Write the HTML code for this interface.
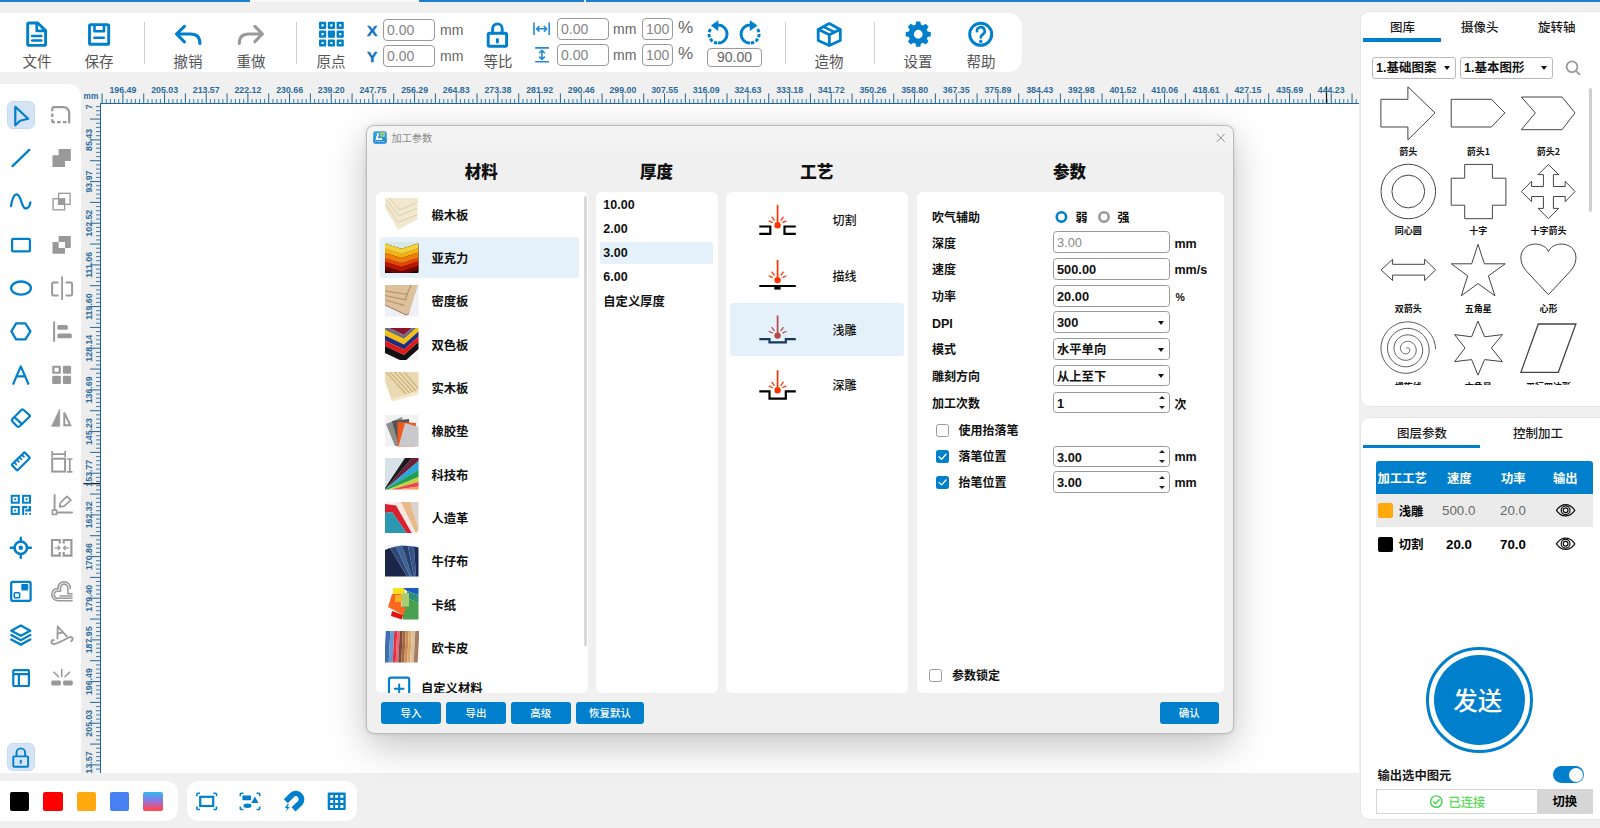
<!DOCTYPE html>
<html lang="zh-CN">
<head>
<meta charset="utf-8">
<title>加工参数</title>
<style>
*{box-sizing:border-box;margin:0;padding:0}
html,body{width:1600px;height:828px;overflow:hidden;background:#f0f0f0;font-family:"Liberation Sans","Noto Sans CJK SC",sans-serif;color:#000}
.abs{position:absolute}
#app{position:relative;width:1600px;height:828px;overflow:hidden;background:#f0f0f0}
.topline{position:absolute;top:0;height:2px;background:#1c7fcf}
/* toolbar */
#tb{position:absolute;left:0;top:13px;width:1022px;height:59px;background:#fff;border-radius:0 14px 14px 0}
.tbl{position:absolute;top:41px;width:60px;text-align:center;font-size:14.5px;line-height:14px;color:#555;font-family:"Noto Sans CJK SC","Liberation Sans",sans-serif}
.sep{position:absolute;top:9px;width:1px;height:42px;background:#cfcfcf}
.inp{position:absolute;height:22px;border:1px solid #9a9a9a;border-radius:4px;background:#fff;font-size:14px;line-height:20px;color:#858585;padding-left:3px}
.unit{position:absolute;font-size:14px;line-height:16px;color:#666}
.xy{position:absolute;font-size:15.500px;font-weight:bold;color:#1574c4;line-height:16px;-webkit-text-stroke:0.400px #1574c4}
svg{position:absolute;overflow:visible}
</style>
</head>
<body>
<div id="app">
<div class="topline" style="left:0;width:250px"></div>
<div class="topline" style="left:250px;width:169px;background:#fafafa"></div>
<div class="topline" style="left:419px;width:165px"></div>
<div class="topline" style="left:586px;width:1014px"></div>
<div id="tb">
<div class="tbl" style="left:7px">文件</div>
<div class="tbl" style="left:69px">保存</div>
<div class="sep" style="left:144px"></div>
<div class="tbl" style="left:158px">撤销</div>
<div class="tbl" style="left:221px">重做</div>
<div class="sep" style="left:296px"></div>
<div class="tbl" style="left:301px">原点</div>
<div class="xy" style="left:367px;top:10px">X</div>
<div class="xy" style="left:367px;top:36px">Y</div>
<div class="inp" style="left:383px;top:6px;width:52px">0.00</div>
<div class="inp" style="left:383px;top:32px;width:52px">0.00</div>
<div class="unit" style="left:440px;top:9px">mm</div>
<div class="unit" style="left:440px;top:35px">mm</div>
<div class="tbl" style="left:468px">等比</div>
<div class="inp" style="left:557px;top:5px;width:51.500px">0.00</div>
<div class="inp" style="left:557px;top:31px;width:51.500px">0.00</div>
<div class="unit" style="left:613px;top:8px">mm</div>
<div class="unit" style="left:613px;top:34px">mm</div>
<div class="inp" style="left:642px;top:5px;width:31px">100</div>
<div class="inp" style="left:642px;top:31px;width:31px">100</div>
<div class="unit" style="left:678px;top:7px;font-size:17px">%</div>
<div class="unit" style="left:678px;top:33px;font-size:17px">%</div>
<div class="inp" style="left:707px;top:35px;width:55px;height:19px;line-height:17px;text-align:center;padding:0;color:#666">90.00</div>
<div class="sep" style="left:785px"></div>
<div class="tbl" style="left:799px">造物</div>
<div class="sep" style="left:874px"></div>
<div class="tbl" style="left:888px">设置</div>
<div class="tbl" style="left:951px">帮助</div>
</div>
<svg style="left:0;top:0" width="1022" height="80" viewBox="0 0 1022 80" fill="none" stroke="#007fcc" stroke-width="2.9" stroke-linecap="round" stroke-linejoin="round">
<!-- file -->
<path d="M27.7 24.4Q27.7 23 29.1 23H37.8L45.6 30.6V44Q45.6 45.4 44.2 45.4H29.1Q27.7 45.4 27.7 44Z"/>
<path d="M36.7 23.4V30.9H45.2" stroke-width="2.6"/>
<path d="M32.2 36.1H41.4M32.2 40.4H41.4" stroke-width="2.5"/>
<!-- save -->
<rect x="89.5" y="24.6" width="19.2" height="19.7" rx="1.4"/>
<path d="M94.5 25V31.2H104V25" stroke-width="2.6"/>
<path d="M94.4 37.8H103.8" stroke-width="2.5"/>
<!-- undo -->
<path d="M184.4 26.4L176.5 34L184.4 41.8M177 34H190.5Q199.9 34 199.9 43.4" stroke-width="3.1"/>
<!-- redo -->
<path d="M254.9 26.4L262.4 34L254.9 41.6M262 34H248.7Q239.3 34 239.3 43.4" stroke="#9a9a9a" stroke-width="3.1"/>
<!-- grid -->
<g stroke="none" fill="#007fcc">
<path fill-rule="evenodd" d="M320 21.8h5.2a1 1 0 0 1 1 1v5.2a1 1 0 0 1-1 1H320a1 1 0 0 1-1-1v-5.2a1 1 0 0 1 1-1zm1.5 2.5v2.2h2.2v-2.2z"/>
<path fill-rule="evenodd" d="M328.8 21.8h5.2a1 1 0 0 1 1 1v5.2a1 1 0 0 1-1 1h-5.2a1 1 0 0 1-1-1v-5.2a1 1 0 0 1 1-1zm1.5 2.5v2.2h2.2v-2.2z"/>
<path fill-rule="evenodd" d="M337.6 21.8h5.2a1 1 0 0 1 1 1v5.2a1 1 0 0 1-1 1h-5.2a1 1 0 0 1-1-1v-5.2a1 1 0 0 1 1-1zm1.5 2.5v2.2h2.2v-2.2z"/>
<path fill-rule="evenodd" d="M320 30.6h5.2a1 1 0 0 1 1 1v5.2a1 1 0 0 1-1 1H320a1 1 0 0 1-1-1v-5.2a1 1 0 0 1 1-1zm1.5 2.5v2.2h2.2v-2.2z"/>
<path d="M328.8 30.6h5.2a1 1 0 0 1 1 1v5.2a1 1 0 0 1-1 1h-5.2a1 1 0 0 1-1-1v-5.2a1 1 0 0 1 1-1z"/>
<path fill-rule="evenodd" d="M337.6 30.6h5.2a1 1 0 0 1 1 1v5.2a1 1 0 0 1-1 1h-5.2a1 1 0 0 1-1-1v-5.2a1 1 0 0 1 1-1zm1.5 2.5v2.2h2.2v-2.2z"/>
<path fill-rule="evenodd" d="M320 39.4h5.2a1 1 0 0 1 1 1v5.2a1 1 0 0 1-1 1H320a1 1 0 0 1-1-1v-5.2a1 1 0 0 1 1-1zm1.5 2.5v2.2h2.2v-2.2z"/>
<path fill-rule="evenodd" d="M328.8 39.4h5.2a1 1 0 0 1 1 1v5.2a1 1 0 0 1-1 1h-5.2a1 1 0 0 1-1-1v-5.2a1 1 0 0 1 1-1zm1.5 2.5v2.2h2.2v-2.2z"/>
<path fill-rule="evenodd" d="M337.6 39.4h5.2a1 1 0 0 1 1 1v5.2a1 1 0 0 1-1 1h-5.2a1 1 0 0 1-1-1v-5.2a1 1 0 0 1 1-1zm1.5 2.5v2.2h2.2v-2.2z"/>
</g>
<!-- lock -->
<rect x="488.2" y="33.2" width="18.4" height="13" rx="1.3"/>
<path d="M492.6 33V28.7a4.8 4.8 0 0 1 9.6 0V33"/>
<path d="M497.4 39.6V42" stroke-width="3"/>
<!-- width icon -->
<g stroke="#2389d4" stroke-width="1.6" stroke-linecap="butt">
<path d="M534 22.5V35M549.2 22.5V35M536.8 28.8H546.6M539.5 26L536.6 28.8L539.5 31.6M543.8 26L546.7 28.8L543.8 31.6"/>
<path d="M535.2 47.9H548.9M535.2 61.7H548.9M542 50.6V59.2M539.2 53.2L542 50.3L544.8 53.2M539.2 56.6L542 59.5L544.8 56.6"/>
</g>
<!-- rotate ccw -->
<path d="M718.1 25.1A9 9 0 0 1 718.1 43.1" stroke-width="3" stroke-linecap="butt"/>
<path d="M718.1 43.1A9 9 0 0 1 711.4 28" stroke-width="3" stroke-linecap="butt" stroke-dasharray="3.4 1.6" stroke-dashoffset="-0.8"/>
<path d="M710.9 25.4L718.3 20.2V31Z" fill="#007fcc" stroke="none"/>
<!-- rotate cw -->
<path d="M750 25.1A9 9 0 0 0 750 43.1" stroke-width="3" stroke-linecap="butt"/>
<path d="M750 43.1A9 9 0 0 0 756.7 28" stroke-width="3" stroke-linecap="butt" stroke-dasharray="3.4 1.6" stroke-dashoffset="-0.8"/>
<path d="M757.6 25.4L749.8 20.2V31Z" fill="#007fcc" stroke="none"/>
<!-- box -->
<path d="M829.3 23.6L840.3 29.4V40.4L829.3 45.6L818.2 40.4V29.4Z" stroke-width="2.8"/>
<path d="M818.6 29.6L829.3 34.8L840 29.6M829.3 34.8V45.3" stroke-width="2.8"/>
<path d="M823.6 26.8L834.6 32.2" stroke-width="2.6"/>
<!-- gear -->
<g stroke="none" fill="#007fcc">
<path fill-rule="evenodd" d="M916.2 21.6h4.1l.7 3.2 1.9.8 2.8-1.8 2.9 2.9-1.8 2.8.8 1.9 3.2.7v4.1l-3.2.7-.8 1.9 1.8 2.8-2.9 2.9-2.8-1.8-1.9.8-.7 3.2h-4.1l-.7-3.2-1.900-.8-2.8 1.8-2.9-2.9 1.800-2.800-.8-1.9-3.200-.7v-4.100l3.200-.7.8-1.900-1.800-2.800 2.900-2.900 2.800 1.800 1.900-.8zM918.250 29.850a4.400 4.400 0 1 0 0 8.800a4.400 4.400 0 1 0 0-8.800z"/>
</g>
<!-- help -->
<circle cx="980.7" cy="34.3" r="11" stroke-width="3"/>
<path d="M976.9 31.2a3.900 3.900 0 1 1 5.800 3.300q-1.900 1.100-1.900 3" stroke-width="2.600"/>
<circle cx="980.800" cy="41.400" r="1.700" fill="#007fcc" stroke="none"/>
</svg>
<div class="abs" style="left:0;top:84px;width:81px;height:689px;background:#fff;border-radius:0 12px 0 0"></div>
<div class="abs" style="left:7px;top:101px;width:28px;height:28px;background:#d4e3f5;border:1px solid #c6daf1;border-radius:6px"></div>
<div class="abs" style="left:7px;top:743px;width:28px;height:28px;background:#d4e3f5;border:1px solid #c6daf1;border-radius:6px"></div>
<svg style="left:0;top:84px" width="82" height="690" viewBox="0 84 82 690" fill="none" stroke="#007fcc" stroke-width="2.2" stroke-linecap="round" stroke-linejoin="round">
<!-- r1 cursor -->
<path d="M15.300 106.800L28.200 118.700L20 120.700L15.300 125.300Z"/>
<!-- r1 dashed -->
<g stroke="#9a9a9a" stroke-width="2.300" stroke-linecap="butt">
<path d="M52.300 107.100H63.500A5.700 5.700 0 0 1 69.200 112.800V123.200"/>
<path d="M52.300 106.100V123.200" stroke-dasharray="3.600 2.200" stroke-dashoffset="-1.500"/>
<path d="M52.300 122.200H69.200" stroke-dasharray="3.600 2.200" stroke-dashoffset="1"/>
</g>
<!-- r2 line -->
<path d="M12.500 166.100L29.300 149.900" stroke-width="2.300"/>
<!-- r2 union -->
<path d="M58.600 149H70.800V161H65V167H52.500V155.300H58.600Z" fill="#999" stroke="none"/>
<!-- r3 sine -->
<path d="M11 206C12.300 197.500 14 194.300 16.700 194.300C21.500 194.300 21 208.500 25.900 208.500C28.300 208.500 29.800 205.500 30.400 202.400" stroke-width="2.300"/>
<!-- r3 intersect -->
<g stroke="#999" stroke-width="1.300" stroke-linejoin="miter">
<rect x="58.600" y="193.300" width="11.500" height="11"/>
<rect x="53.100" y="198.800" width="11.500" height="11"/>
<rect x="58.600" y="198.800" width="6" height="5.500" fill="#999" stroke="none"/>
</g>
<!-- r4 rect -->
<rect x="12.100" y="238.900" width="17.800" height="12.500" rx="1"/>
<!-- r4 difference -->
<path fill-rule="evenodd" d="M58.600 236H70.800V248H65V253.800H52.500V241.900H58.600ZM58.600 241.900V248H65V241.900Z" fill="#999" stroke="none"/>
<!-- r5 ellipse -->
<ellipse cx="21" cy="288.100" rx="9.900" ry="6.600" stroke-width="2.300"/>
<!-- r5 mirror -->
<g stroke="#9a9a9a" stroke-width="2">
<path d="M62.100 277.200V299.200" stroke-width="1.800"/>
<path d="M57.800 282.500H53.300Q52.100 282.500 52.100 283.700V294.200Q52.100 295.400 53.300 295.400H57.800"/>
<path d="M66.400 282.500H70.900Q72.100 282.500 72.100 283.700V294.200Q72.100 295.400 70.900 295.400H66.400"/>
</g>
<!-- r6 hexagon -->
<path d="M11.400 331.400L16.100 323.400H25.400L30.400 331.400L25.400 339.400H16.100Z" stroke-width="2.300"/>
<!-- r6 align -->
<g stroke="none" fill="#999">
<rect x="53.100" y="321.300" width="2" height="20.600" rx="1"/>
<rect x="57.300" y="325" width="10.500" height="4.700" rx="1.500"/>
<rect x="57.300" y="333.400" width="14.500" height="4.800" rx="1.500"/>
</g>
<!-- r7 A -->
<path d="M13.300 383.800L20.800 366.400L28.300 383.800M16.300 376.400H25.300"/>
<!-- r7 grid4 -->
<g stroke="none" fill="#999">
<path fill-rule="evenodd" d="M53.400 365.700h6.300a1.200 1.200 0 0 1 1.200 1.200v5.700a1.200 1.200 0 0 1-1.200 1.200h-6.300a1.200 1.200 0 0 1-1.200-1.200v-5.700a1.200 1.200 0 0 1 1.200-1.200zm1.100 2.100v3.900h4.100v-3.900z"/>
<rect x="62.900" y="365.700" width="8.200" height="8.100" rx="1.200"/>
<rect x="52.200" y="375.800" width="8.700" height="8.100" rx="1.200"/>
<rect x="62.900" y="375.800" width="8.200" height="8.100" rx="1.200"/>
</g>
<!-- r8 eraser -->
<path d="M21.600 409.700Q22.500 408.900 23.400 409.700L29.500 415.100Q30.400 415.900 29.500 416.700L19.600 426.300Q18.300 427.500 17 426.300L12.400 421.600Q11.400 420.300 12.400 419Z"/>
<path d="M15.100 417.800L22 424.100"/>
<!-- r8 flip -->
<path d="M59.700 409.600V426.200H51.900Z" fill="#999" stroke="#999" stroke-width="0.800"/>
<path d="M64.300 412.600V425.300H70.300Z" stroke="#999" stroke-width="2" stroke-linejoin="miter"/>
<!-- r9 ruler -->
<g transform="translate(20.800 461.350) rotate(-44.500)">
<rect x="-9" y="-4" width="18" height="8" rx="0.800"/>
<path d="M-5.400 -3.500V-0.300M-1.800 -3.500V-0.300M1.800 -3.500V-0.300M5.400 -3.500V-0.300" stroke-width="1.800" stroke-linecap="butt"/>
</g>
<!-- r9 dimension -->
<g stroke="#999" stroke-width="2" stroke-linecap="butt" stroke-linejoin="miter">
<rect x="52.200" y="458.700" width="12.900" height="12.900"/>
<path d="M51.500 454.200H65.800M52.100 451V457.200M65.200 451V457.200" stroke-width="1.700"/>
<path d="M69.800 459V472M67 459H72.400M67 471.900H72.400" stroke-width="1.700"/>
</g>
<!-- r10 qr -->
<g stroke-width="2" stroke-linejoin="miter" stroke-linecap="butt">
<rect x="11.700" y="495.800" width="7.100" height="6.900"/>
<rect x="23.100" y="495.800" width="6.900" height="6.900"/>
<rect x="11.700" y="507" width="7.100" height="6.900"/>
<g stroke="none" fill="#007fcc">
<rect x="14.300" y="498.300" width="1.900" height="1.900"/><rect x="25.600" y="498.300" width="1.900" height="1.900"/><rect x="14.300" y="509.500" width="1.900" height="1.900"/>
<path d="M22.100 506H27.300V508.200H24.200V514.900H22.100Z"/>
<path d="M25.300 509.300H28.600V506H31V511.600H25.300Z"/>
<rect x="25.400" y="513" width="1.700" height="1.900"/><rect x="29.200" y="513" width="1.800" height="1.900"/>
</g>
</g>
<!-- r10 node edit -->
<g stroke="#999" stroke-width="1.900">
<path d="M54.600 495V509.300M57.300 512.500H72"/>
<rect x="52.400" y="510.200" width="4.200" height="4.200" stroke-width="1.600" stroke-linejoin="miter"/>
<path d="M59.600 506.900L60.500 502.600L66.900 496.400L70.800 500.200L64.200 506.200Z" stroke-width="1.700"/>
</g>
<!-- r11 target -->
<circle cx="20.800" cy="547.800" r="6.200" stroke-width="2.600"/>
<circle cx="20.800" cy="547.800" r="2.200" fill="#007fcc" stroke="none"/>
<path d="M20.800 537.800V541M20.800 554.600V557.800M10.800 547.800H14M27.600 547.800H30.900" stroke-width="2.400"/>
<!-- r11 merge -->
<g stroke="#999" stroke-width="2.200" stroke-linecap="butt" stroke-linejoin="miter">
<path d="M59.700 543.600V540H52V555.600H59.700V552"/>
<path d="M63.700 543.600V540H71.400V555.600H63.700V552"/>
<path d="M54.600 547.800H60M57.800 545.600L60 547.800L57.800 550M68.800 547.800H63.400M65.600 545.600L63.400 547.800L65.600 550" stroke-width="1.300"/>
</g>
<!-- r12 blue squares -->
<rect x="11.200" y="581.900" width="19.400" height="18.900" rx="1.600" stroke-width="2.300"/>
<rect x="21.300" y="584" width="6.900" height="6.400" rx="0.800" fill="#007fcc" stroke="none"/>
<rect x="14.300" y="592.800" width="5.300" height="5" rx="0.800" stroke-width="1.600"/>
<!-- r12 heart offset -->
<g stroke="#999" stroke-width="1.600">
<path d="M72 600.700H58.500C54.500 600.700 51.800 598 51.800 594.500C51.800 590.500 55 588.300 58 588.900C57.700 584.500 60.500 581.700 64 581.700C68 581.700 70.500 584.800 70.300 588.500"/>
<path d="M72 598.300H58.700C56 598.300 54.200 596.700 54.200 594.400C54.200 591.800 56.500 590.500 58.800 591.300H60.500V589C60.200 586.200 61.800 584.100 64 584.100C66.500 584.100 68 586.200 67.900 588.500V593.800H72"/>
<path d="M72 596H60"/>
</g>
<!-- r13 layers -->
<path d="M20.800 625.400L30.300 630.700L20.800 635.800L11.300 630.700Z" stroke-width="2.300"/>
<path d="M11.300 635.100L20.800 640.300L30.300 635.100M11.300 639.400L20.800 644.600L30.300 639.400" stroke-width="2.300" stroke-linejoin="miter"/>
<!-- r13 text path -->
<g stroke="#999" stroke-width="1.800">
<path d="M57.400 638.500L57.700 626.500L66.800 636.300M57.500 633.700L63.300 632.300"/>
<path d="M53.800 640.100C51 639.400 50.400 643.700 53.600 644C56.500 644.200 61 641.800 69.300 637.300C72.600 635.700 73.800 639.800 71 641.200"/>
</g>
<!-- r14 table -->
<rect x="13.300" y="670.100" width="15.600" height="15.900" rx="0.800"/>
<path d="M13.300 674.100H28.900M18.900 674.100V686" stroke-linecap="butt"/>
<!-- r14 break -->
<g stroke="none" fill="#999">
<rect x="51.200" y="680.500" width="9.700" height="5" rx="1.400"/>
<rect x="63.100" y="680.500" width="9.700" height="5" rx="1.400"/>
</g>
<path d="M61.700 669.500V676.600M54 672.200L58.600 676.700M69.600 672.200L65 676.700" stroke="#999" stroke-width="1.600"/>
<!-- lock -->
<g stroke-width="1.900">
<rect x="13.300" y="756.400" width="14.800" height="10.400" rx="0.800"/>
<path d="M16.500 756V752.700a4.300 4.300 0 0 1 8.600 0V756"/>
<path d="M20.800 760.700V762.700" stroke-width="2"/>
</g>
</svg>
<div class="abs" style="left:82px;top:104px;width:19px;height:669px;background:#ededed"></div>
<div class="abs" style="left:100px;top:103px;width:1259px;height:670px;background:#fff;border-left:1px solid #1f6593;border-top:1px solid #1f6593"></div>
<svg style="left:82px;top:84px" width="1278" height="690" viewBox="82 84 1278 690" font-family="Liberation Sans, sans-serif" font-size="8.800" font-weight="bold" fill="#2c6b9c" stroke="#2c6b9c">
<defs><clipPath id="vclip"><rect x="82" y="104.500" width="19" height="668.500"/></clipPath></defs>
<path d="M106.23 99V103M110.40 99V103M114.57 99V103M118.73 99V103M127.07 99V103M131.23 99V103M135.40 99V103M139.57 99V103M147.90 99V103M152.07 99V103M156.23 99V103M160.40 99V103M168.73 99V103M172.90 99V103M177.07 99V103M181.23 99V103M189.57 99V103M193.73 99V103M197.90 99V103M202.07 99V103M210.40 99V103M214.57 99V103M218.73 99V103M222.90 99V103M231.23 99V103M235.40 99V103M239.57 99V103M243.73 99V103M252.07 99V103M256.23 99V103M260.40 99V103M264.57 99V103M272.90 99V103M277.07 99V103M281.23 99V103M285.40 99V103M293.73 99V103M297.90 99V103M302.07 99V103M306.23 99V103M314.57 99V103M318.73 99V103M322.90 99V103M327.07 99V103M335.40 99V103M339.57 99V103M343.73 99V103M347.90 99V103M356.23 99V103M360.40 99V103M364.57 99V103M368.73 99V103M377.07 99V103M381.23 99V103M385.40 99V103M389.57 99V103M397.90 99V103M402.07 99V103M406.23 99V103M410.40 99V103M418.73 99V103M422.90 99V103M427.07 99V103M431.23 99V103M439.57 99V103M443.73 99V103M447.90 99V103M452.07 99V103M460.40 99V103M464.57 99V103M468.73 99V103M472.90 99V103M481.23 99V103M485.40 99V103M489.57 99V103M493.73 99V103M502.07 99V103M506.23 99V103M510.40 99V103M514.57 99V103M522.90 99V103M527.07 99V103M531.23 99V103M535.40 99V103M543.73 99V103M547.90 99V103M552.07 99V103M556.23 99V103M564.57 99V103M568.73 99V103M572.90 99V103M577.07 99V103M585.40 99V103M589.57 99V103M593.73 99V103M597.90 99V103M606.23 99V103M610.40 99V103M614.57 99V103M618.73 99V103M627.07 99V103M631.23 99V103M635.40 99V103M639.57 99V103M647.90 99V103M652.07 99V103M656.23 99V103M660.40 99V103M668.73 99V103M672.90 99V103M677.07 99V103M681.23 99V103M689.57 99V103M693.73 99V103M697.90 99V103M702.07 99V103M710.40 99V103M714.57 99V103M718.73 99V103M722.90 99V103M731.23 99V103M735.40 99V103M739.57 99V103M743.73 99V103M752.07 99V103M756.23 99V103M760.40 99V103M764.57 99V103M772.90 99V103M777.07 99V103M781.23 99V103M785.40 99V103M793.73 99V103M797.90 99V103M802.07 99V103M806.23 99V103M814.57 99V103M818.73 99V103M822.90 99V103M827.07 99V103M835.40 99V103M839.57 99V103M843.73 99V103M847.90 99V103M856.23 99V103M860.40 99V103M864.57 99V103M868.73 99V103M877.07 99V103M881.23 99V103M885.40 99V103M889.57 99V103M897.90 99V103M902.07 99V103M906.23 99V103M910.40 99V103M918.73 99V103M922.90 99V103M927.07 99V103M931.23 99V103M939.57 99V103M943.73 99V103M947.90 99V103M952.07 99V103M960.40 99V103M964.57 99V103M968.73 99V103M972.90 99V103M981.23 99V103M985.40 99V103M989.57 99V103M993.73 99V103M1002.07 99V103M1006.23 99V103M1010.40 99V103M1014.57 99V103M1022.90 99V103M1027.07 99V103M1031.23 99V103M1035.40 99V103M1043.73 99V103M1047.90 99V103M1052.07 99V103M1056.23 99V103M1064.57 99V103M1068.73 99V103M1072.90 99V103M1077.07 99V103M1085.40 99V103M1089.57 99V103M1093.73 99V103M1097.90 99V103M1106.23 99V103M1110.40 99V103M1114.57 99V103M1118.73 99V103M1127.07 99V103M1131.23 99V103M1135.40 99V103M1139.57 99V103M1147.90 99V103M1152.07 99V103M1156.23 99V103M1160.40 99V103M1168.73 99V103M1172.90 99V103M1177.07 99V103M1181.23 99V103M1189.57 99V103M1193.73 99V103M1197.90 99V103M1202.07 99V103M1210.40 99V103M1214.57 99V103M1218.73 99V103M1222.90 99V103M1231.23 99V103M1235.40 99V103M1239.57 99V103M1243.73 99V103M1252.07 99V103M1256.23 99V103M1260.40 99V103M1264.57 99V103M1272.90 99V103M1277.07 99V103M1281.23 99V103M1285.40 99V103M1293.73 99V103M1297.90 99V103M1302.07 99V103M1306.23 99V103M1314.57 99V103M1318.73 99V103M1322.90 99V103M1327.07 99V103M1335.40 99V103M1339.57 99V103M1343.73 99V103M1347.90 99V103M1356.23 99V103" stroke-width="0.900" stroke="#2f6f9f"/>
<path d="M102.07 93.400V103M122.90 93.400V103M143.73 93.400V103M164.57 93.400V103M185.40 93.400V103M206.23 93.400V103M227.07 93.400V103M247.90 93.400V103M268.73 93.400V103M289.57 93.400V103M310.40 93.400V103M331.23 93.400V103M352.07 93.400V103M372.90 93.400V103M393.73 93.400V103M414.57 93.400V103M435.40 93.400V103M456.23 93.400V103M477.07 93.400V103M497.90 93.400V103M518.73 93.400V103M539.57 93.400V103M560.40 93.400V103M581.23 93.400V103M602.07 93.400V103M622.90 93.400V103M643.73 93.400V103M664.57 93.400V103M685.40 93.400V103M706.23 93.400V103M727.07 93.400V103M747.90 93.400V103M768.73 93.400V103M789.57 93.400V103M810.40 93.400V103M831.23 93.400V103M852.07 93.400V103M872.90 93.400V103M893.73 93.400V103M914.57 93.400V103M935.40 93.400V103M956.23 93.400V103M977.07 93.400V103M997.90 93.400V103M1018.73 93.400V103M1039.57 93.400V103M1060.40 93.400V103M1081.23 93.400V103M1102.07 93.400V103M1122.90 93.400V103M1143.73 93.400V103M1164.57 93.400V103M1185.40 93.400V103M1206.23 93.400V103M1227.07 93.400V103M1247.90 93.400V103M1268.73 93.400V103M1289.57 93.400V103M1310.40 93.400V103M1331.23 93.400V103M1352.07 93.400V103" stroke-width="1" stroke="#266696"/>
<path d="M96 106.57H100M96 110.73H100M96 114.90H100M96 123.23H100M96 127.40H100M96 131.57H100M96 135.73H100M96 144.07H100M96 148.23H100M96 152.40H100M96 156.57H100M96 164.90H100M96 169.07H100M96 173.23H100M96 177.40H100M96 185.73H100M96 189.90H100M96 194.07H100M96 198.23H100M96 206.57H100M96 210.73H100M96 214.90H100M96 219.07H100M96 227.40H100M96 231.57H100M96 235.73H100M96 239.90H100M96 248.23H100M96 252.40H100M96 256.57H100M96 260.73H100M96 269.07H100M96 273.23H100M96 277.40H100M96 281.57H100M96 289.90H100M96 294.07H100M96 298.23H100M96 302.40H100M96 310.73H100M96 314.90H100M96 319.07H100M96 323.23H100M96 331.57H100M96 335.73H100M96 339.90H100M96 344.07H100M96 352.40H100M96 356.57H100M96 360.73H100M96 364.90H100M96 373.23H100M96 377.40H100M96 381.57H100M96 385.73H100M96 394.07H100M96 398.23H100M96 402.40H100M96 406.57H100M96 414.90H100M96 419.07H100M96 423.23H100M96 427.40H100M96 435.73H100M96 439.90H100M96 444.07H100M96 448.23H100M96 456.57H100M96 460.73H100M96 464.90H100M96 469.07H100M96 477.40H100M96 481.57H100M96 485.73H100M96 489.90H100M96 498.23H100M96 502.40H100M96 506.57H100M96 510.73H100M96 519.07H100M96 523.23H100M96 527.40H100M96 531.57H100M96 539.90H100M96 544.07H100M96 548.23H100M96 552.40H100M96 560.73H100M96 564.90H100M96 569.07H100M96 573.23H100M96 581.57H100M96 585.73H100M96 589.90H100M96 594.07H100M96 602.40H100M96 606.57H100M96 610.73H100M96 614.90H100M96 623.23H100M96 627.40H100M96 631.57H100M96 635.73H100M96 644.07H100M96 648.23H100M96 652.40H100M96 656.57H100M96 664.90H100M96 669.07H100M96 673.23H100M96 677.40H100M96 685.73H100M96 689.90H100M96 694.07H100M96 698.23H100M96 706.57H100M96 710.73H100M96 714.90H100M96 719.07H100M96 727.40H100M96 731.57H100M96 735.73H100M96 739.90H100M96 748.23H100M96 752.40H100M96 756.57H100M96 760.73H100M96 769.07H100" stroke-width="0.900" stroke="#2f6f9f"/>
<path d="M90 119.07H100M90 139.90H100M90 160.73H100M90 181.57H100M90 202.40H100M90 223.23H100M90 244.07H100M90 264.90H100M90 285.73H100M90 306.57H100M90 327.40H100M90 348.23H100M90 369.07H100M90 389.90H100M90 410.73H100M90 431.57H100M90 452.40H100M90 473.23H100M90 494.07H100M90 514.90H100M90 535.73H100M90 556.57H100M90 577.40H100M90 598.23H100M90 619.07H100M90 639.90H100M90 660.73H100M90 681.57H100M90 702.40H100M90 723.23H100M90 744.07H100M90 764.90H100" stroke-width="1" stroke="#266696"/>
<path d="M1326.500 86.600V103M83.500 483.600H100" stroke="#111" stroke-width="1.200"/>
<g stroke="none">
<text x="83.600" y="98.700" font-size="8.300">mm</text>
<text x="122.9" y="92.600" text-anchor="middle">196.49</text>
<text x="164.6" y="92.600" text-anchor="middle">205.03</text>
<text x="206.2" y="92.600" text-anchor="middle">213.57</text>
<text x="247.9" y="92.600" text-anchor="middle">222.12</text>
<text x="289.6" y="92.600" text-anchor="middle">230.66</text>
<text x="331.2" y="92.600" text-anchor="middle">239.20</text>
<text x="372.9" y="92.600" text-anchor="middle">247.75</text>
<text x="414.6" y="92.600" text-anchor="middle">256.29</text>
<text x="456.2" y="92.600" text-anchor="middle">264.83</text>
<text x="497.9" y="92.600" text-anchor="middle">273.38</text>
<text x="539.6" y="92.600" text-anchor="middle">281.92</text>
<text x="581.2" y="92.600" text-anchor="middle">290.46</text>
<text x="622.9" y="92.600" text-anchor="middle">299.00</text>
<text x="664.6" y="92.600" text-anchor="middle">307.55</text>
<text x="706.2" y="92.600" text-anchor="middle">316.09</text>
<text x="747.9" y="92.600" text-anchor="middle">324.63</text>
<text x="789.6" y="92.600" text-anchor="middle">333.18</text>
<text x="831.2" y="92.600" text-anchor="middle">341.72</text>
<text x="872.9" y="92.600" text-anchor="middle">350.26</text>
<text x="914.6" y="92.600" text-anchor="middle">358.80</text>
<text x="956.2" y="92.600" text-anchor="middle">367.35</text>
<text x="997.9" y="92.600" text-anchor="middle">375.89</text>
<text x="1039.6" y="92.600" text-anchor="middle">384.43</text>
<text x="1081.2" y="92.600" text-anchor="middle">392.98</text>
<text x="1122.9" y="92.600" text-anchor="middle">401.52</text>
<text x="1164.6" y="92.600" text-anchor="middle">410.06</text>
<text x="1206.2" y="92.600" text-anchor="middle">418.61</text>
<text x="1247.9" y="92.600" text-anchor="middle">427.15</text>
<text x="1289.6" y="92.600" text-anchor="middle">435.69</text>
<text x="1331.2" y="92.600" text-anchor="middle">444.23</text>
<g clip-path="url(#vclip)">
<text transform="translate(91.500 98.2) rotate(-90)" text-anchor="middle">76.89</text>
<text transform="translate(91.500 139.9) rotate(-90)" text-anchor="middle">85.43</text>
<text transform="translate(91.500 181.6) rotate(-90)" text-anchor="middle">93.97</text>
<text transform="translate(91.500 223.2) rotate(-90)" text-anchor="middle">102.52</text>
<text transform="translate(91.500 264.9) rotate(-90)" text-anchor="middle">111.06</text>
<text transform="translate(91.500 306.6) rotate(-90)" text-anchor="middle">119.60</text>
<text transform="translate(91.500 348.2) rotate(-90)" text-anchor="middle">128.14</text>
<text transform="translate(91.500 389.9) rotate(-90)" text-anchor="middle">136.69</text>
<text transform="translate(91.500 431.6) rotate(-90)" text-anchor="middle">145.23</text>
<text transform="translate(91.500 473.2) rotate(-90)" text-anchor="middle">153.77</text>
<text transform="translate(91.500 514.9) rotate(-90)" text-anchor="middle">162.32</text>
<text transform="translate(91.500 556.6) rotate(-90)" text-anchor="middle">170.86</text>
<text transform="translate(91.500 598.2) rotate(-90)" text-anchor="middle">179.40</text>
<text transform="translate(91.500 639.9) rotate(-90)" text-anchor="middle">187.95</text>
<text transform="translate(91.500 681.6) rotate(-90)" text-anchor="middle">196.49</text>
<text transform="translate(91.500 723.2) rotate(-90)" text-anchor="middle">205.03</text>
<text transform="translate(91.500 764.9) rotate(-90)" text-anchor="middle">213.57</text>
</g></g></svg>
<div class="abs" style="left:0;top:781px;width:178px;height:40px;background:#fff;border-radius:0 12px 12px 0"></div>
<div class="abs" style="left:187px;top:781px;width:170px;height:40px;background:#fff;border-radius:12px"></div>
<div class="abs" style="left:10px;top:792px;width:19px;height:19px;border-radius:2px;background:#000"></div>
<div class="abs" style="left:43px;top:792px;width:19.500px;height:19px;border-radius:2px;background:#fe0000"></div>
<div class="abs" style="left:77px;top:792px;width:19px;height:19px;border-radius:2px;background:#ffa90f"></div>
<div class="abs" style="left:110px;top:792px;width:19px;height:19px;border-radius:2px;background:#4781f1"></div>
<div class="abs" style="left:143px;top:792px;width:19.500px;height:19px;border-radius:2px;background:linear-gradient(#2fb8f2,#8a78e4 45%,#fb4a5a 90%)"></div>
<svg style="left:180px;top:778px" width="180" height="46" viewBox="180 778 180 46" fill="none" stroke="#007fcc" stroke-width="2.200" stroke-linejoin="round">
<rect x="200.200" y="796.800" width="13" height="9.200" stroke-linejoin="miter"/>
<path d="M196.900 796.300V794.300Q196.900 793.200 198 793.200H200M213.400 793.200H215.400Q216.500 793.200 216.500 794.300V796.300M216.500 806.600V808.400Q216.500 809.500 215.400 809.500H213.400M200 809.500H198Q196.900 809.500 196.900 808.400V806.600" stroke-width="1.600"/>
<path d="M240.300 796.300V794.300Q240.300 793.200 241.400 793.200H243.400M256.600 793.200H258.600Q259.700 793.200 259.700 794.300V796.300M259.700 806.600V808.400Q259.700 809.500 258.600 809.500H256.600M243.400 809.500H241.400Q240.300 809.500 240.300 808.400V806.600" stroke-width="1.600"/>
<g stroke="none" fill="#007fcc">
<rect x="242.400" y="795.400" width="8.700" height="4.800" rx="0.600"/>
<path d="M254.900 796.600L258.500 803.100H251.300Z"/>
<ellipse cx="247.500" cy="805.700" rx="4" ry="2.200"/>
<!-- magnet -->
<path d="M283.800 799.200L290.400 792.700A8.600 8.600 0 0 1 302.400 804.900L295.500 811.400L291.500 807.300L298.100 800.900A2.900 2.900 0 0 0 294.200 796.700L287.800 803.300Z"/>
<path d="M287.600 803.900L284.800 808H287.200L285.800 811.700L289.800 806.700H287.300L289 803.900Z"/>
<!-- grid -->
<path fill-rule="evenodd" d="M328.800 792.400H344.600Q345.700 792.400 345.700 793.500V808.900Q345.700 810 344.600 810H328.800Q327.700 810 327.700 808.900V793.500Q327.700 792.400 328.800 792.400ZM330.200 794.900V797.800H333.200V794.900ZM335.100 794.900V797.800H338.100V794.900ZM340.300 794.900V797.800H343.400V794.900ZM330.200 799.900V803H333.200V799.900ZM335.100 799.900V803H338.100V799.900ZM340.300 799.900V803H343.400V799.900ZM330.200 805V808.100H333.200V805ZM335.100 805V808.100H338.100V805ZM340.300 805V808.100H343.400V805Z"/>
</g>
</svg>
<style>
.rp{position:absolute;left:1360px;width:245px;background:#fff;border-radius:9px 0 0 9px;border:1px solid #e6e6e6}
.tab{position:absolute;font-size:12.500px;line-height:14px;color:#1a1a1a;font-weight:500;white-space:nowrap;font-family:"Noto Sans CJK SC","Liberation Sans",sans-serif}
.sel{position:absolute;height:22px;border:1px solid #b9b9b9;border-radius:3px;background:#fff;font-size:12.500px;line-height:20px;font-weight:bold;color:#111;padding-left:3px;white-space:nowrap}
.sel:after,.dd:after{content:"";position:absolute;right:5px;top:8.500px;border:3.500px solid transparent;border-top:4px solid #111;border-bottom:0}
.shl{position:absolute;margin-top:-0.700px;width:70px;text-align:center;font-size:9px;line-height:10px;font-weight:bold;color:#111;white-space:nowrap;font-family:"Noto Sans CJK SC","Liberation Sans",sans-serif}
.th{position:absolute;top:471px;font-size:12.300px;line-height:14px;font-weight:bold;color:#fff;white-space:nowrap;font-family:"Noto Sans CJK SC","Liberation Sans",sans-serif}
.td{position:absolute;font-size:13.300px;line-height:14px;white-space:nowrap}
</style>
<div class="rp" style="top:11px;height:396px"></div>
<div class="tab" style="left:1390px;top:19.500px">图库</div>
<div class="tab" style="left:1461px;top:19.500px">摄像头</div>
<div class="tab" style="left:1538px;top:19.500px">旋转轴</div>
<div class="abs" style="left:1363px;top:38.300px;width:78px;height:3.600px;background:#007fcc"></div>
<div class="sel" style="left:1372px;top:56.500px;width:84px">1.基础图案</div>
<div class="sel" style="left:1460px;top:56.500px;width:92.500px">1.基本图形</div>
<svg style="left:1562px;top:58px" width="22" height="20" viewBox="1562 58 22 20" fill="none" stroke="#9a9a9a" stroke-width="1.800" stroke-linecap="round"><circle cx="1572" cy="66.700" r="5.400"/><path d="M1576 70.800L1579.500 74.300"/></svg>
<div class="abs" style="left:1588.500px;top:88px;width:3.500px;height:124px;border-radius:2px;background:#cfcfcf"></div>
<svg style="left:1362px;top:80px" width="238" height="306" viewBox="1362 80 238 306" fill="none" stroke="#444" stroke-width="1" stroke-linejoin="miter">
<path d="M1380.900 99.300H1407.900V86.800L1435 112.900L1407.900 139.900V127H1380.900Z"/>
<path d="M1451.200 99.300H1491.400L1504.900 112.900L1491.400 127H1451.200Z"/>
<path d="M1521.400 97H1562L1575 112.900L1562 129.700H1521.400L1535.300 112.900Z"/>
<circle cx="1408.300" cy="191.500" r="27.300"/><circle cx="1408.300" cy="191.500" r="16.400"/>
<path d="M1464.700 164.400H1492.400V178.200H1505.900V205.200H1492.400V218.700H1464.700V205.200H1451.200V178.200H1464.700Z"/>
<path d="M1548.400 164.400L1558.600 174.600H1553.400V186.500H1565.200V181.300L1575 191.500L1565.200 201.700V196.500H1553.400V208.400H1558.600L1548.400 218.700L1538.200 208.400H1543.400V196.500H1531.600V201.700L1521.400 191.500L1531.600 181.300V186.500H1543.400V174.600H1538.200Z"/>
<path d="M1381.100 269.900L1392.600 259.300V264.300H1424.600V259.300L1435.700 269.900L1424.600 280.600V275.100H1392.600V280.600Z"/>
<path d="M1478 244.300L1484.400 263.800H1505.200L1488.400 275.900L1494.900 295.800L1478 283.600L1461.300 295.800L1467.700 275.900L1451.300 263.800H1471.700Z"/>
<path d="M1548.400 251.600C1552 243 1566 241.500 1572.500 248.500C1578.500 255 1576 265.500 1570 271.500L1548.400 294.700L1526.800 271.500C1520.800 265.500 1518.300 255 1524.300 248.500C1530.800 241.500 1544.800 243 1548.400 251.600Z"/>
<path d="M1478 321.200L1484.600 336.800L1502.400 334.600L1491.400 348L1502.400 361.600L1484.600 359.600L1478 375.100L1471.600 359.600L1454.600 361.600L1465 348L1454.600 334.600L1471.600 336.800Z"/>
<path d="M1538.300 324H1575.900L1558.300 372.300H1520.900Z" stroke-width="1.300"/>
<path d="M1406.3 348.5L1406.3 348.4L1406.4 348.3L1406.4 348.2L1406.5 348.1L1406.6 348.0L1406.7 347.9L1406.8 347.8L1407.0 347.7L1407.1 347.7L1407.3 347.6L1407.4 347.6L1407.6 347.6L1407.8 347.6L1408.0 347.6L1408.2 347.7L1408.4 347.8L1408.5 347.9L1408.7 348.0L1408.9 348.1L1409.1 348.3L1409.2 348.5L1409.4 348.7L1409.5 348.9L1409.6 349.1L1409.7 349.4L1409.7 349.6L1409.8 349.9L1409.8 350.2L1409.8 350.5L1409.7 350.8L1409.7 351.1L1409.6 351.4L1409.4 351.7L1409.3 351.9L1409.1 352.2L1408.9 352.5L1408.6 352.7L1408.4 353.0L1408.1 353.2L1407.7 353.4L1407.4 353.5L1407.0 353.7L1406.6 353.8L1406.3 353.8L1405.8 353.9L1405.4 353.9L1405.0 353.8L1404.6 353.7L1404.2 353.6L1403.7 353.5L1403.3 353.3L1402.9 353.0L1402.6 352.7L1402.2 352.4L1401.9 352.1L1401.6 351.7L1401.3 351.3L1401.1 350.8L1400.8 350.4L1400.7 349.9L1400.6 349.4L1400.5 348.9L1400.4 348.3L1400.5 347.8L1400.5 347.2L1400.6 346.7L1400.8 346.1L1401.0 345.6L1401.3 345.0L1401.6 344.5L1401.9 344.1L1402.3 343.6L1402.8 343.2L1403.2 342.8L1403.8 342.4L1404.3 342.1L1404.9 341.9L1405.5 341.7L1406.2 341.5L1406.8 341.4L1407.5 341.3L1408.2 341.3L1408.9 341.4L1409.5 341.5L1410.2 341.7L1410.9 342.0L1411.5 342.3L1412.2 342.7L1412.8 343.1L1413.3 343.6L1413.8 344.1L1414.3 344.7L1414.8 345.3L1415.2 346.0L1415.5 346.7L1415.7 347.4L1416.0 348.2L1416.1 349.0L1416.2 349.8L1416.2 350.6L1416.1 351.4L1416.0 352.2L1415.8 353.0L1415.5 353.8L1415.1 354.6L1414.7 355.4L1414.2 356.1L1413.7 356.8L1413.1 357.4L1412.4 358.0L1411.7 358.5L1410.9 359.0L1410.1 359.4L1409.2 359.7L1408.3 360.0L1407.4 360.2L1406.5 360.3L1405.5 360.3L1404.6 360.2L1403.6 360.1L1402.7 359.9L1401.7 359.6L1400.8 359.2L1400.0 358.7L1399.1 358.2L1398.3 357.6L1397.6 356.9L1396.9 356.2L1396.2 355.3L1395.7 354.5L1395.2 353.5L1394.8 352.6L1394.4 351.6L1394.2 350.5L1394.0 349.5L1394.0 348.4L1394.0 347.3L1394.1 346.2L1394.4 345.1L1394.7 344.0L1395.1 343.0L1395.6 342.0L1396.1 341.0L1396.8 340.1L1397.6 339.2L1398.4 338.4L1399.3 337.7L1400.3 337.0L1401.3 336.4L1402.4 335.9L1403.5 335.5L1404.6 335.2L1405.8 335.0L1407.0 334.9L1408.3 334.9L1409.5 335.0L1410.7 335.2L1411.9 335.5L1413.1 335.9L1414.3 336.4L1415.4 337.0L1416.4 337.7L1417.4 338.6L1418.4 339.4L1419.2 340.4L1420.0 341.5L1420.7 342.6L1421.3 343.8L1421.8 345.0L1422.2 346.3L1422.4 347.6L1422.6 348.9L1422.7 350.3L1422.6 351.7L1422.4 353.0L1422.1 354.4L1421.7 355.7L1421.2 357.0L1420.5 358.2L1419.8 359.4L1418.9 360.6L1418.0 361.6L1416.9 362.6L1415.8 363.5L1414.6 364.3L1413.3 365.0L1412.0 365.6L1410.6 366.1L1409.2 366.4L1407.7 366.7L1406.2 366.8L1404.7 366.8L1403.2 366.6L1401.7 366.3L1400.2 365.9L1398.8 365.4L1397.4 364.7L1396.1 364.0L1394.8 363.1L1393.6 362.1L1392.5 361.0L1391.5 359.8L1390.6 358.5L1389.7 357.1L1389.0 355.7L1388.5 354.2L1388.0 352.6L1387.7 351.1L1387.5 349.4L1387.5 347.8L1387.6 346.2L1387.8 344.5L1388.2 342.9L1388.7 341.3L1389.4 339.8L1390.2 338.3L1391.1 336.9L1392.1 335.6L1393.3 334.3L1394.6 333.2L1395.9 332.1L1397.4 331.2L1398.9 330.4L1400.5 329.7L1402.2 329.1L1403.9 328.7L1405.6 328.5L1407.4 328.4L1409.1 328.4L1410.9 328.6L1412.7 329.0L1414.4 329.5L1416.1 330.1L1417.7 330.9L1419.3 331.8L1420.8 332.9L1422.2 334.1L1423.5 335.4L1424.7 336.8L1425.7 338.4L1426.6 340.0L1427.4 341.7L1428.1 343.4L1428.6 345.3L1428.9 347.1L1429.1 349.0L1429.1 350.9L1429.0 352.8L1428.7 354.7L1428.2 356.6L1427.6 358.5L1426.8 360.2L1425.9 362.0L1424.8 363.6L1423.6 365.1L1422.2 366.6L1420.7 367.9L1419.1 369.1L1417.4 370.2L1415.7 371.1L1413.8 371.8L1411.9 372.5L1409.9 372.9L1407.9 373.2L1405.8 373.3L1403.8 373.2L1401.7 372.9L1399.7 372.5L1397.7 371.9L1395.8 371.2L1393.9 370.2L1392.1 369.1L1390.4 367.9L1388.8 366.5L1387.4 365.0L1386.0 363.3L1384.8 361.6L1383.8 359.7L1382.9 357.7L1382.1 355.7L1381.6 353.6L1381.2 351.5L1381.0 349.3L1381.0 347.1L1381.2 344.9L1381.6 342.8L1382.1 340.6L1382.9 338.5L1383.8 336.5L1384.9 334.6L1386.1 332.7L1387.5 330.9L1389.1 329.3L1390.8 327.8L1392.6 326.5L1394.6 325.3L1396.6 324.3L1398.7 323.4L1400.9 322.7L1403.2 322.3L1405.5 322.0L1407.8 321.9L1410.1 322.0L1412.4 322.3L1414.7 322.8L1417.0 323.5L1419.2 324.4L1421.3 325.4L1423.3 326.7L1425.2 328.1L1427.0 329.7L1428.6 331.5L1430.1 333.3L1431.5 335.3L1432.7 337.5L1433.6 339.7L1434.4 342.0L1435.0 344.3L1435.4 346.8L1435.6 349.2" stroke-width="0.900"/>
</svg>
<div class="shl" style="left:1373.300px;top:147.600px">箭头</div>
<div class="shl" style="left:1443.300px;top:147.600px">箭头1</div>
<div class="shl" style="left:1513.400px;top:147.600px">箭头2</div>
<div class="shl" style="left:1373.300px;top:226.200px">同心圆</div>
<div class="shl" style="left:1443.300px;top:226.200px">十字</div>
<div class="shl" style="left:1513.400px;top:226.200px">十字箭头</div>
<div class="shl" style="left:1373.300px;top:304.500px">双箭头</div>
<div class="shl" style="left:1443.300px;top:304.500px">五角星</div>
<div class="shl" style="left:1513.400px;top:304.500px">心形</div>
<div class="abs" style="left:1370px;top:382.300px;width:215px;height:3px;overflow:hidden">
<div class="shl" style="left:3.300px;top:0.500px">螺旋线</div>
<div class="shl" style="left:73.300px;top:0.500px">六角星</div>
<div class="shl" style="left:143.400px;top:0.500px">平行四边形</div>
</div>
<!-- bottom right panel -->
<div class="rp" style="top:416.500px;height:403px"></div>
<div class="tab" style="left:1397px;top:426px">图层参数</div>
<div class="tab" style="left:1513px;top:426px">控制加工</div>
<div class="abs" style="left:1363px;top:444.500px;width:117px;height:3.400px;background:#007fcc"></div>
<div class="abs" style="left:1376px;top:460.500px;width:217px;height:33.500px;background:#007fcc;border-radius:3px 3px 0 0"></div>
<div class="th" style="left:1377.600px">加工工艺</div>
<div class="th" style="left:1447px">速度</div>
<div class="th" style="left:1501px">功率</div>
<div class="th" style="left:1553px">输出</div>
<div class="abs" style="left:1376px;top:494px;width:217px;height:33px;background:#ebebeb"></div>
<div class="abs" style="left:1378px;top:503px;width:15px;height:15px;border-radius:2px;background:#ffa90f"></div>
<div class="abs" style="left:1378px;top:536.500px;width:15px;height:15px;border-radius:2px;background:#000"></div>
<div class="td" style="left:1398.800px;top:503.800px;font-size:12.300px;font-weight:bold;font-family:'Noto Sans CJK SC',sans-serif">浅雕</div>
<div class="td" style="left:1398.800px;top:537px;font-size:12.300px;font-weight:bold;font-family:'Noto Sans CJK SC',sans-serif">切割</div>
<div class="td" style="left:1442px;top:504px;color:#6a6a6a">500.0</div>
<div class="td" style="left:1500px;top:504px;color:#6a6a6a">20.0</div>
<div class="td" style="left:1446px;top:537.500px;font-weight:bold">20.0</div>
<div class="td" style="left:1500px;top:537.500px;font-weight:bold">70.0</div>
<svg style="left:1555px;top:500px" width="22" height="56" viewBox="1555 500 22 56" fill="none" stroke="#111" stroke-width="1.200">
<path d="M1556.400 510.3 C1559.400 506.1 1562.300 504.7 1565.600 504.7 C1568.900 504.7 1571.800 506.1 1574.800 510.3 C1571.800 514.5 1568.900 515.9 1565.600 515.9 C1562.300 515.9 1559.400 514.5 1556.400 510.3Z"/><circle cx="1565.600" cy="510.300" r="4.400"/><circle cx="1565.600" cy="510.300" r="2.400"/>
<path d="M1556.400 543.8 C1559.400 539.6 1562.300 538.2 1565.600 538.2 C1568.900 538.2 1571.800 539.6 1574.800 543.8 C1571.800 548 1568.900 549.4 1565.600 549.4 C1562.300 549.4 1559.400 548 1556.400 543.8Z"/><circle cx="1565.600" cy="543.800" r="4.400"/><circle cx="1565.600" cy="543.800" r="2.400"/>
</svg>
<div class="abs" style="left:1426px;top:646.800px;width:106.600px;height:106.600px;border-radius:50%;border:3px solid #007fcc;background:#fff"></div>
<div class="abs" style="left:1434px;top:654.800px;width:90.600px;height:90.600px;border-radius:50%;background:#007fcc;color:#fff;font-size:24.500px;line-height:90px;text-align:center;padding-right:3px;font-weight:500;font-family:'Noto Sans CJK SC',sans-serif">发送</div>
<div class="tab" style="left:1377.500px;top:768px;font-size:12.300px;font-weight:bold">输出选中图元</div>
<div class="abs" style="left:1553px;top:766.200px;width:31px;height:17px;border-radius:9px;background:#007fcc"></div>
<div class="abs" style="left:1568.800px;top:767.600px;width:14.200px;height:14.200px;border-radius:50%;background:#fff"></div>
<div class="abs" style="left:1376px;top:789px;width:216.500px;height:24.600px;border:1.500px solid #d4d4d4;background:#fff"></div>
<div class="abs" style="left:1537px;top:789px;width:55.500px;height:24.600px;background:#d6d6d6;text-align:center;font-size:12.300px;line-height:24px;font-weight:bold;font-family:'Noto Sans CJK SC',sans-serif">切换</div>
<svg style="left:1429px;top:794px" width="16" height="16" viewBox="1429 794 16 16" fill="none" stroke="#3fd34a" stroke-width="1.400" stroke-linecap="round" stroke-linejoin="round"><circle cx="1436.300" cy="801.600" r="5.700"/><path d="M1433.600 801.700L1435.600 803.700L1439.200 799.700"/></svg>
<div class="abs" style="left:1448.500px;top:794.500px;font-size:12.300px;line-height:14px;color:#55dd55;font-weight:500;font-family:'Noto Sans CJK SC',sans-serif">已连接</div>
<style>
#dlg{position:absolute;left:366px;top:125px;width:868px;height:609px;background:#f0f0f0;border:1px solid #bcbcbc;border-radius:8px;box-shadow:0 12px 38px rgba(0,0,0,.24),0 0 4px rgba(0,0,0,.12);font-family:"Noto Sans CJK SC","Liberation Sans",sans-serif}
#dlg .tbar{position:absolute;left:0;top:0;width:100%;height:25px;background:#f3f3f3;border-radius:8px 8px 0 0}
.d{position:absolute}
.hd{position:absolute;top:162px;width:80px;text-align:center;font-size:16.500px;line-height:18px;font-weight:900;color:#111}
.box{position:absolute;top:192px;height:501px;background:#fff;border-radius:6px;overflow:hidden}
.mi{position:absolute;left:55.500px;font-size:12.300px;line-height:14px;font-weight:bold;color:#111;white-space:nowrap}
.th2{position:absolute;left:9px;width:33.500px;height:31.500px;overflow:hidden}
.ti{position:absolute;left:7px;font-size:12.500px;line-height:14px;font-weight:bold;color:#111;white-space:nowrap;font-family:"Liberation Sans","Noto Sans CJK SC",sans-serif}
.pl{position:absolute;margin-top:0.800px;left:106.300px;font-size:12px;line-height:14px;font-weight:500;color:#111;white-space:nowrap}
.lb{position:absolute;margin-top:0.700px;left:932px;font-size:12px;line-height:14px;font-weight:bold;color:#111;white-space:nowrap}
.in{position:absolute;left:1053px;width:116.500px;height:21.500px;border:1px solid #9a9a9a;border-radius:3.500px;background:#fff;font-size:12.800px;line-height:21.300px;font-weight:bold;color:#111;padding-left:3px;white-space:nowrap;font-family:"Liberation Sans","Noto Sans CJK SC",sans-serif}
.un{position:absolute;margin-top:0.700px;left:1174.500px;font-size:12.500px;line-height:14px;font-weight:bold;color:#111;white-space:nowrap;font-family:"Liberation Sans","Noto Sans CJK SC",sans-serif}
.dd:after{right:5px;top:8.500px}
.sp:before{content:"";position:absolute;right:3.500px;top:3.500px;border:3px solid transparent;border-bottom:3.500px solid #222;border-top:0}
.sp:after{content:"";position:absolute;right:3.500px;bottom:3px;border:3px solid transparent;border-top:3.500px solid #222;border-bottom:0}
.cb{position:absolute;width:13px;height:13px;border:1px solid #9a9a9a;border-radius:2.500px;background:#fff}
.cbc{position:absolute;width:13px;height:13px;border-radius:2.500px;background:#007fcc}
.btn{position:absolute;top:702.200px;height:21.600px;background:#007fcc;border-radius:3px;color:#fff;font-size:10.500px;line-height:21.500px;font-weight:500;text-align:center;font-family:"Noto Sans CJK SC",sans-serif}
</style>
<div id="dlg"><div class="tbar"></div></div>
<!-- title -->
<svg style="left:373px;top:131px" width="14" height="13" viewBox="0 0 14 13"><defs><linearGradient id="lg1" x1="0" y1="0" x2="0" y2="1"><stop offset="0" stop-color="#3aa8e6"/><stop offset="1" stop-color="#1583cf"/></linearGradient></defs><rect x="0.200" y="0.200" width="13.600" height="12.600" rx="2.200" fill="url(#lg1)"/><path d="M5.300 2.200L3.600 8.200H9.200" stroke="#fff" stroke-width="1.800" fill="none"/><rect x="7.600" y="1.600" width="4" height="4" fill="#f2e23a"/><rect x="8.700" y="2.700" width="1.800" height="1.800" fill="#2a8fd8"/><path d="M2 10.600H12" stroke="#bfe3f7" stroke-width="1" stroke-dasharray="1.200 0.700"/></svg>
<div class="d" style="left:391.500px;top:130.500px;font-size:10.200px;line-height:14px;color:#8a8a8a;font-family:'Noto Sans CJK SC',sans-serif">加工参数</div>
<svg style="left:1215px;top:132px" width="12" height="12" viewBox="0 0 12 12" stroke="#8d8d8d" stroke-width="1"><path d="M1.800 1.800L9.800 9.800M9.800 1.800L1.800 9.800"/></svg>
<div class="hd" style="left:441.300px;font-family:'Noto Sans CJK SC',sans-serif">材料</div>
<div class="hd" style="left:616.400px;font-family:'Noto Sans CJK SC',sans-serif">厚度</div>
<div class="hd" style="left:776.700px;font-family:'Noto Sans CJK SC',sans-serif">工艺</div>
<div class="hd" style="left:1029.600px;font-family:'Noto Sans CJK SC',sans-serif">参数</div>
<!-- materials -->
<div class="box" style="left:376px;width:211.500px;font-family:'Noto Sans CJK SC',sans-serif">
<div class="d" style="left:4px;top:44.800px;width:199px;height:41px;background:#e5f1fa;border-radius:3px"></div>
<div class="d" style="left:207.500px;top:4px;width:3.500px;height:450px;background:#d8d8d8;border-radius:2px"></div>
<div class="mi" style="top:16px">椴木板</div>
<div class="mi" style="top:59.200px">亚克力</div>
<div class="mi" style="top:102.400px">密度板</div>
<div class="mi" style="top:145.700px">双色板</div>
<div class="mi" style="top:189px">实木板</div>
<div class="mi" style="top:232.300px">橡胶垫</div>
<div class="mi" style="top:275.600px">科技布</div>
<div class="mi" style="top:318.900px">人造革</div>
<div class="mi" style="top:362.200px">牛仔布</div>
<div class="mi" style="top:405.500px">卡纸</div>
<div class="mi" style="top:448.700px">欧卡皮</div>
<div class="mi" style="top:489px;left:45px">自定义材料</div>
<svg style="left:11px;top:484px" width="24" height="20" viewBox="0 0 24 20" fill="none" stroke="#007fcc" stroke-width="2.200" stroke-linecap="round"><path d="M2 20V3.600Q2 1.600 4 1.600H20.200Q22.200 1.600 22.200 3.600V20"/><path d="M12.200 8.500V17M7.800 12.700H16.600" stroke-width="2"/></svg>
<svg style="left:9px;top:6px;overflow:hidden" width="33.500" height="31.5" viewBox="0 0 33.500 31.5"><polygon points="0,0 33,0 33,3 31.5,5 33,7.5 31.5,10.5 33,13.5 31.5,17 33,21 13,31.5 0,10" fill="#f1e8cf"/><path d="M4.500 0L14.500 12L33 4M2 2.500L13.500 18L33 10M0.500 6L13 24.500L33 16.500" fill="none" stroke="#d9cba6" stroke-width="0.900"/></svg>
<svg style="left:9px;top:49.5px;overflow:hidden" width="33.500" height="31.5" viewBox="0 0 33.500 31.5"><rect width="33.500" height="31.500" rx="3" fill="#1c0606"/><g clip-path="inset(0 round 3px)"><polygon points="0,-12 16.5,-7 33.5,-12.5 33.5,1.3 16.5,6.8 0,1.8" fill="#d5e8e6"/><polygon points="0,1.8 16.5,6.8 33.5,1.3 33.5,6 16.5,11.5 0,6.5" fill="#f4d233"/><polygon points="0,6.5 16.5,11.5 33.5,6 33.5,10.5 16.5,16 0,11" fill="#f2b212"/><polygon points="0,11 16.5,16 33.5,10.5 33.5,15 16.5,20.5 0,15.5" fill="#ee7d00"/><polygon points="0,15.5 16.5,20.5 33.5,15 33.5,19.5 16.5,25 0,20" fill="#e24600"/><polygon points="0,20 16.5,25 33.5,19.5 33.5,24 16.5,29.5 0,24.5" fill="#b81500"/><polygon points="0,24.5 16.5,29.5 33.5,24 33.5,28 16.5,33.5 0,28.5" fill="#6a0600"/><polygon points="0,28.5 16.5,33.5 33.5,28 33.5,39.5 16.5,45 0,40" fill="#1c0606"/><path d="M0 6.500L16.500 11.500L33.500 6M0 15.500L16.500 20.500L33.500 15" stroke="#fff" stroke-opacity="0.450" stroke-width="0.600" fill="none"/></g></svg>
<svg style="left:9px;top:93px;overflow:hidden" width="33.500" height="31.5" viewBox="0 0 33.500 31.5"><rect width="33.500" height="31.500" fill="#eef0f7"/><polygon points="0,0 33,0 24,28.5 21,30 0,20" fill="#dcc19c"/><path d="M0 6L23 9.500M0 10.500L21.500 15M0 15L19.500 20.500M22 9.500L26 0M20 15L22 10" fill="none" stroke="#b48f62" stroke-width="1.100"/><path d="M0 20L21 30L24 28.500" fill="none" stroke="#9c7a52" stroke-width="1"/></svg>
<svg style="left:9px;top:136px;overflow:hidden" width="33.500" height="31.5" viewBox="0 0 33.500 31.5"><rect width="33.500" height="31.500" fill="#f4f4f4"/><polygon points="0,-14 19,-5 33.5,-18 33.5,-6 19,7 0,-2" fill="#8c1230"/><polygon points="0,-2 19,7 33.5,-6 33.5,-2 19,11 0,2" fill="#6e6e78"/><polygon points="0,2 19,11 33.5,-2 33.5,3.5 19,16.5 0,7.5" fill="#f6c010"/><polygon points="0,7.5 19,16.5 33.5,3.5 33.5,8.5 19,21.5 0,12.5" fill="#1e2f80"/><polygon points="0,12.5 19,21.5 33.5,8.5 33.5,14 19,27 0,18" fill="#e01a1a"/><polygon points="0,18 19,27 33.5,14 33.5,21 19,34 0,25" fill="#111111"/></svg>
<svg style="left:9px;top:179.5px;overflow:hidden" width="33.500" height="29" viewBox="0 0 33.500 29"><rect width="33.500" height="29" fill="#fdfcf8"/><polygon points="0,0 33.5,0 33.5,21.5 7,29 0,9" fill="#ead9b2"/><path d="M1 0L21 22M5 0L24.500 21M9.500 0L28 20M14 0L31 19M19 0L33 16" fill="none" stroke="#cdb37c" stroke-width="1.200"/><path d="M7 28L33.500 20.500" stroke="#f3e8c9" stroke-width="3" fill="none"/></svg>
<svg style="left:9px;top:223px;overflow:hidden" width="33.500" height="31.5" viewBox="0 0 33.500 31.5"><rect width="33.500" height="31.500" fill="#f1f1f1"/><polygon points="1,9 17,2 22,31 10,31" fill="#8e8e8e"/><polygon points="7,6 24,4 26,31 14,31" fill="#555555"/><polygon points="12.5,7 31,8 30,31.5 12.5,31.5" fill="#f05a1e"/><polygon points="20,8 33.5,12 33.5,31.5 13.5,31.5" fill="#c9c9cd"/></svg>
<svg style="left:9px;top:266px;overflow:hidden" width="33.500" height="31.5" viewBox="0 0 33.500 31.5"><rect width="33.500" height="31.500" fill="#d9e1e8"/><polygon points="0,30 20,0 27,0 0,31.5" fill="#1b1b1f"/><polygon points="0,31.5 27,0 33.5,0 33.5,3" fill="#6e2038"/><polygon points="0,31.5 33.5,3 33.5,12" fill="#2fa6d8"/><polygon points="33.5,12 33.5,19 3,31.5 0,31.5" fill="#1fa052"/><polygon points="33.5,19 33.5,24 7,31.5 3,31.5" fill="#c6d03e"/><polygon points="33.5,24 33.5,28.5 12,31.5 7,31.5" fill="#f0405e"/><polygon points="33.5,28.5 33.5,31.5 12,31.5" fill="#f8a254"/></svg>
<svg style="left:9px;top:309.5px;overflow:hidden" width="33.500" height="31.5" viewBox="0 0 33.500 31.5"><rect width="33.500" height="31.500" fill="#faf1ee"/><polygon points="25,0 33.5,0 33.5,27" fill="#d9d4cf"/><polygon points="15,0 25,0 33.5,27 31,31.5" fill="#e8b98a"/><polygon points="10,0 16,0 31,31.5 27,31.5 11,4" fill="#f7e6e1"/><polygon points="0,2 11,3.5 27,31.5 22,31.5 7,10 0,11" fill="#d8202e"/><polygon points="0,11 7,10 22,31.5 0,31.5" fill="#2b98b2"/></svg>
<svg style="left:9px;top:353px;overflow:hidden" width="33.500" height="31.5" viewBox="0 0 33.500 31.5"><rect width="33.500" height="31.500" fill="#f3f4f8"/><polygon points="0,5 5,3 22,31.5 0,31.5" fill="#1b2648"/><polygon points="5,3 11,1.5 25,31.5 22,31.5" fill="#2f4a7a"/><polygon points="11,1.5 17,0.5 27,31.5 25,31.5" fill="#3d6296"/><polygon points="17,0.5 23,1 29,31.5 27,31.5" fill="#27406e"/><polygon points="23,1 29,1.5 31,31.5 29,31.5" fill="#35558a"/><polygon points="29,1.5 33.5,2.5 33.5,31.5 31,31.5" fill="#1a2a55"/></svg>
<svg style="left:9px;top:396px;overflow:hidden" width="33.500" height="31.5" viewBox="0 0 33.500 31.5"><rect width="33.500" height="31.500" fill="#fbfbfb"/><polygon points="8,0 20,0 20,6 8,6" fill="#f8e21c"/><polygon points="18,0 33.5,0 33.5,7 22,3" fill="#1a5ac2"/><polygon points="22,3 33.5,7 33.5,15 22,10" fill="#2f8f78"/><polygon points="22,10 33.5,15 33.5,31.5 18,31.5 17,18 22,18" fill="#49a04f"/><polygon points="7,6 16,6 16,18 21,20 18,27 3,19" fill="#f8691f"/><polygon points="16.5,5 24,5 24,18.5 16.5,18.5" fill="#a9cd72"/><polygon points="10,7 17,7 17,14 10,14" fill="#f9b120"/><polygon points="7,23 18,27 17,31.5 6,28" fill="#e0120f"/></svg>
<svg style="left:9px;top:439.3px;overflow:hidden" width="33.500" height="31.5" viewBox="0 0 33.500 31.5"><polygon points="0.8,0 5.3,0 3.7,31.5 -0.8,31.5" fill="#3f6fb0"/><polygon points="5.3,0 9.3,0 7.7,31.5 3.7,31.5" fill="#6a9ad2"/><polygon points="9.3,0 12.3,0 10.7,31.5 7.7,31.5" fill="#e23242"/><polygon points="12.3,0 14.8,0 13.2,31.5 10.7,31.5" fill="#f0606f"/><polygon points="14.8,0 17.8,0 16.2,31.5 13.2,31.5" fill="#7a4a3a"/><polygon points="17.8,0 20.8,0 19.2,31.5 16.2,31.5" fill="#a8683f"/><polygon points="20.8,0 23.8,0 22.2,31.5 19.2,31.5" fill="#c98c5c"/><polygon points="23.8,0 26.8,0 25.2,31.5 22.2,31.5" fill="#d9ab66"/><polygon points="26.8,0 30.3,0 28.7,31.5 25.2,31.5" fill="#dcbf9f"/><polygon points="30.3,0 34.3,0 32.7,31.5 28.7,31.5" fill="#a47c62"/></svg>
</div>
<!-- thickness -->
<div class="box" style="left:596.300px;width:121.500px">
<div class="d" style="left:3.700px;top:50.200px;width:113.500px;height:21.600px;background:#e5f1fa;border-radius:2px"></div>
<div class="ti" style="top:5.800px">10.00</div>
<div class="ti" style="top:29.900px">2.00</div>
<div class="ti" style="top:54px">3.00</div>
<div class="ti" style="top:78.100px">6.00</div>
<div class="ti" style="top:102.200px;font-size:12.300px;font-family:'Noto Sans CJK SC',sans-serif">自定义厚度</div>
</div>
<!-- process -->
<div class="box" style="left:726.200px;width:182.200px">
<div class="d" style="left:4px;top:111.200px;width:174px;height:53px;background:#e5f1fa;border-radius:3px"></div>
<div class="pl" style="top:21.500px">切割</div>
<div class="pl" style="top:76.800px">描线</div>
<div class="pl" style="top:131.300px">浅雕</div>
<div class="pl" style="top:186.300px">深雕</div>
</div>
<svg style="left:750px;top:200px" width="60" height="205" viewBox="750 200 60 205" fill="none" stroke="#ff3300" stroke-width="1.700" stroke-linecap="round">
<g id="laser"><path d="M777.600 205.700V222"/><circle cx="777.600" cy="225.200" r="3.200" fill="#ff3300" stroke="none"/><path d="M772 217.200L774.200 220.200M769.200 221.100L772.300 222.400M783.200 217.200L781 220.200M786 221.100L782.900 222.400" stroke-width="1.300"/></g>
<path d="M759.300 226.500H770.300V233.900H759.300M795.800 226.500H784.500V233.900H795.800" stroke="#000" stroke-width="2.200" stroke-linecap="butt" stroke-linejoin="miter"/>
<use href="#laser" y="54.900"/>
<path d="M759.300 286H795.800" stroke="#000" stroke-width="2.200" stroke-linecap="butt"/><rect x="774.300" y="286" width="6.300" height="3.600" fill="#000" stroke="none"/>
<g stroke="#b84a44"><path d="M777.600 316V333"/><circle cx="777.600" cy="335.600" r="3.200" fill="#b84a44" stroke="none"/><path d="M772 327.600L774.200 330.600M769.200 331.500L772.300 332.800M783.200 327.600L781 330.600M786 331.500L782.900 332.800" stroke-width="1.300"/></g>
<path d="M759.300 339.200H769.500V342.300H785.800V339.200H795.800" stroke="#173a5c" stroke-width="2.200" stroke-linecap="butt" stroke-linejoin="miter"/>
<use href="#laser" y="165.100"/>
<path d="M759.300 391.400H769.500V398.600H785.800V391.400H795.800" stroke="#000" stroke-width="2.200" stroke-linecap="butt" stroke-linejoin="miter"/>
</svg>
<!-- params -->
<div class="box" style="left:916.700px;width:307.800px;height:500.500px"></div>
<div class="lb" style="top:210px">吹气辅助</div>
<div class="lb" style="top:236.300px">深度</div>
<div class="lb" style="top:262.700px">速度</div>
<div class="lb" style="top:289.500px">功率</div>
<div class="lb" style="top:316px;font-family:'Liberation Sans',sans-serif;font-size:12.500px">DPI</div>
<div class="lb" style="top:342.800px">模式</div>
<div class="lb" style="top:369.600px">雕刻方向</div>
<div class="lb" style="top:396.100px">加工次数</div>
<svg style="left:1054px;top:209px" width="60" height="16" viewBox="1054 209 60 16" fill="#fff" stroke-width="2.600"><circle cx="1061.400" cy="216.900" r="4.700" stroke="#007fcc"/><circle cx="1104" cy="216.900" r="4.700" stroke="#9a9a9a"/></svg>
<div class="lb" style="left:1075.500px;top:210px">弱</div>
<div class="lb" style="left:1117.500px;top:210px">强</div>
<div class="in" style="top:231.300px;color:#8a8a8a;font-weight:normal">3.00</div>
<div class="in" style="top:258px">500.00</div>
<div class="in" style="top:285px">20.00</div>
<div class="in dd" style="top:311.300px">300</div>
<div class="in dd" style="top:338px;font-size:12.300px;line-height:23.500px">水平单向</div>
<div class="in dd" style="top:364.800px;font-size:12.300px;line-height:23.500px">从上至下</div>
<div class="in sp" style="top:391.500px">1</div>
<div class="in sp" style="top:445.500px">3.00</div>
<div class="in sp" style="top:471px">3.00</div>
<div class="un" style="top:236px">mm</div>
<div class="un" style="top:262.500px">mm/s</div>
<div class="un" style="top:289.500px;left:1175.500px;font-size:10.500px">%</div>
<div class="un" style="top:396.100px;font-family:'Noto Sans CJK SC',sans-serif;font-size:12px">次</div>
<div class="un" style="top:449.500px">mm</div>
<div class="un" style="top:475.300px">mm</div>
<div class="cb" style="left:936px;top:423.500px"></div>
<div class="lb" style="left:958.500px;top:423px">使用抬落笔</div>
<div class="cbc" style="left:936px;top:450px"></div>
<div class="lb" style="left:958.500px;top:449.500px">落笔位置</div>
<div class="cbc" style="left:936px;top:475.700px"></div>
<div class="lb" style="left:958.500px;top:475.300px">抬笔位置</div>
<svg style="left:936px;top:450px" width="13" height="40" viewBox="0 0 13 40" fill="none" stroke="#fff" stroke-width="1.300" stroke-linecap="round" stroke-linejoin="round"><path d="M3 6.700L5.500 9.200L10 4.300M3 32.400L5.500 34.900L10 30"/></svg>
<div class="cb" style="left:928.500px;top:669.200px"></div>
<div class="lb" style="left:952px;top:668.700px">参数锁定</div>
<!-- buttons -->
<div class="btn" style="left:381px;width:59.800px">导入</div>
<div class="btn" style="left:446.200px;width:59.500px">导出</div>
<div class="btn" style="left:511.100px;width:59.500px">高级</div>
<div class="btn" style="left:576px;width:68px">恢复默认</div>
<div class="btn" style="left:1159.600px;width:59.200px">确认</div>
</div>
</body>
</html>
